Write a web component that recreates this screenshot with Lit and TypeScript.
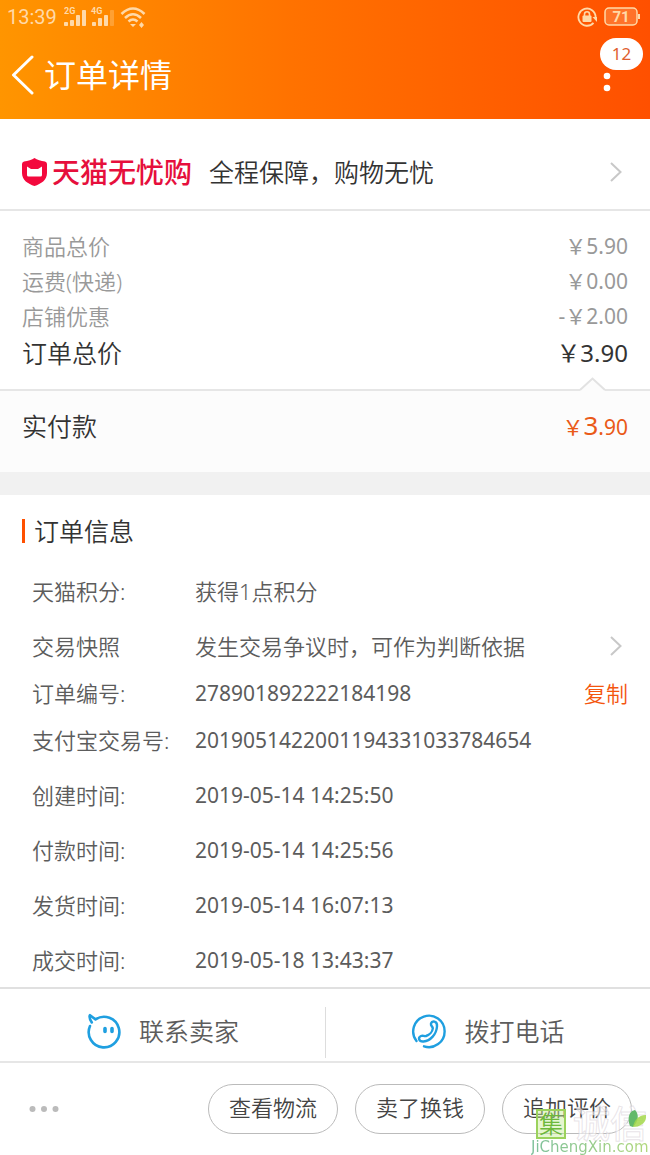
import { LitElement, html, css, svg } from "lit";
import { customElement } from "lit/decorators.js";

interface InfoItem {
  label: string;
  value: string;
  link?: boolean;
  copy?: boolean;
}

const PRICES = [
  ["商品总价", "￥5.90"],
  ["运费(快递)", "￥0.00"],
  ["店铺优惠", "-￥2.00"],
];

const INFO: InfoItem[][] = [
  [{ label: "天猫积分:", value: "获得1点积分" }],
  [
    { label: "交易快照", value: "发生交易争议时，可作为判断依据", link: true },
    { label: "订单编号:", value: "278901892222184198", copy: true },
    { label: "支付宝交易号:", value: "2019051422001194331033784654" },
  ],
  [{ label: "创建时间:", value: "2019-05-14 14:25:50" }],
  [{ label: "付款时间:", value: "2019-05-14 14:25:56" }],
  [{ label: "发货时间:", value: "2019-05-14 16:07:13" }],
  [{ label: "成交时间:", value: "2019-05-18 13:43:37" }],
];

const chevron = html`<svg class="chevron" width="12" height="20" viewBox="0 0 12 20" aria-hidden="true">
  <path d="M1 1l9.500 9L1 19" fill="none" stroke="#c8c8c8" stroke-width="2" />
</svg>`;

const bars = (heights: number[], dim: number) =>
  heights.map(
    (h, i) => svg`<rect x=${i * 6} y=${18 - h} width="4" height=${h} rx="0.800"
      opacity=${i >= dim ? 0.3 : 1} />`
  );

@customElement("app-root")
export class AppRoot extends LitElement {
  static styles = css`
    :host {
      display: flex;
      flex-direction: column;
      min-height: 100vh;
      position: relative;
      overflow: hidden;
      background: #fff;
      color: #333;
      font-family: "Noto Sans", "Noto Sans CJK SC", sans-serif;
      font-weight: 350;
      font-size: 22px;
      line-height: 32px;
    }
    * {
      box-sizing: border-box;
    }
    button,
    a {
      font: inherit;
      color: inherit;
      text-decoration: none;
      background: none;
      border: 0;
      padding: 0;
      margin: 0;
      white-space: nowrap;
    }
    svg {
      display: block;
      flex: none;
    }
    h1,
    h2,
    dl,
    dd {
      margin: 0;
      font-weight: inherit;
    }
    .num {
      font-size: 21px;
      font-weight: 400;
    }
    .header {
      height: 119px;
      background: linear-gradient(90deg, #ff9500, #ff7200 45%, #ff5000);
      color: #fff;
    }
    .status {
      display: flex;
      justify-content: space-between;
      align-items: center;
      height: 33px;
      padding: 0 10px 0 7px;
      color: #ffd9a8;
      fill: #ffd9a8;
    }
    .status-group {
      display: flex;
      align-items: center;
      gap: 7px;
    }
    .clock {
      font: 400 20px/32px Roboto, sans-serif;
    }
    .net {
      font: 700 9px Roboto, sans-serif;
    }
    .titlebar {
      display: flex;
      justify-content: space-between;
      align-items: center;
      height: 84px;
      padding: 0 36px 0 11px;
    }
    .back {
      display: flex;
      align-items: center;
      gap: 10px;
    }
    .title {
      font-size: 32px;
      line-height: 44px;
      font-weight: 400;
    }
    .more {
      position: relative;
      width: 14px;
      height: 44px;
    }
    .badge {
      position: absolute;
      left: 0;
      bottom: 27px;
      width: 43px;
      height: 32px;
      border-radius: 16px;
      background: #fff;
      color: #e06030;
      font: 400 17px/32px "Noto Sans", sans-serif;
      text-align: center;
    }
    .dots {
      position: absolute;
      left: 3px;
      bottom: 4px;
    }
    .promo {
      display: flex;
      align-items: center;
      height: 92px;
      padding: 16px 28px 0 22px;
      border-bottom: 2px solid #e6e6e6;
      font-size: 25px;
    }
    .brand {
      margin: 0 17px 0 5px;
      font-size: 28px;
      font-weight: 500;
      color: #e60f3c;
    }
    .chevron {
      margin-left: auto;
    }
    .prices {
      padding: 17px 22px 16px;
      border-bottom: 2px solid #e6e6e6;
      color: #999;
      position: relative;
    }
    .price {
      display: flex;
      justify-content: space-between;
      align-items: center;
      height: 35px;
    }
    .total {
      height: 40px;
      color: #333;
      font-size: 25px;
    }
    .total .num {
      font-size: 24px;
    }
    .notch {
      position: absolute;
      right: 44px;
      bottom: -2px;
    }
    .paid {
      display: flex;
      justify-content: space-between;
      align-items: center;
      height: 81px;
      padding: 0 22px 12px;
      background: #fcfcfc;
      font-size: 25px;
    }
    .amount {
      font-size: 21px;
      font-weight: 400;
      color: #ea5a18;
    }
    .amount-main {
      font-size: 26px;
    }
    .band {
      height: 23px;
      background: #f1f1f1;
    }
    .info-title {
      margin: 19px 0 0 22px;
      display: flex;
      align-items: center;
      gap: 9px;
      height: 34px;
      font-size: 25px;
    }
    .info-title::before {
      content: "";
      width: 3px;
      height: 24px;
      background: #ff5000;
    }
    .info {
      display: flex;
      flex-direction: column;
      gap: 23px;
      padding: 27px 22px 11px 32px;
      color: #5c5c5c;
    }
    .info-group {
      display: flex;
      flex-direction: column;
      gap: 15px;
    }
    .info-row {
      display: grid;
      grid-template-columns: 163px 1fr auto;
      align-items: center;
      height: 32px;
      white-space: nowrap;
    }
    .info-row .chevron {
      margin-right: 6px;
    }
    .copy {
      color: #f4560f;
    }
    .contact {
      display: grid;
      grid-template-columns: 1fr 1fr;
      height: 76px;
      align-items: center;
      border-top: 2px solid #e0e0e0;
      border-bottom: 2px solid #e6e6e6;
      font-size: 25px;
      color: #5c5c5c;
    }
    .contact-link {
      display: flex;
      align-items: center;
      justify-content: center;
      gap: 17px;
      height: 51px;
      margin-top: 14px;
      padding-bottom: 3px;
    }
    .contact-link + .contact-link {
      border-left: 1px solid #ddd;
    }
    .actions {
      display: flex;
      align-items: center;
      gap: 17px;
      height: 91px;
      padding: 0 18px 0 29px;
      color: #444;
    }
    .overflow {
      margin-right: auto;
    }
    .pill {
      width: 130px;
      height: 50px;
      padding-bottom: 3px;
      border: 1px solid #bbb;
      border-radius: 25px;
    }
    .mark {
      position: absolute;
      right: 0;
      bottom: 0;
      width: 119px;
      pointer-events: none;
    }
    .mark-top {
      display: flex;
      align-items: center;
      gap: 7px;
      height: 30px;
      padding-left: 5px;
    }
    .mark-box {
      width: 30px;
      height: 30px;
      border: 2px solid #9bd25c;
      background: rgba(200, 236, 150, 0.45);
      color: #6db83a;
      font-size: 24px;
      line-height: 25px;
      text-align: center;
    }
    .mark-name {
      font-size: 37px;
      line-height: 30px;
      font-weight: 500;
      color: rgba(255, 255, 255, 0.6);
      -webkit-text-stroke: 1px rgba(205, 195, 205, 0.45);
    }
    .leaf {
      position: absolute;
      right: 4px;
      top: 0;
    }
    .mark-url {
      font: 400 15px/16px "DejaVu Sans", sans-serif;
      background: linear-gradient(90deg, #7cc09a, #b2d87c);
      background-clip: text;
      -webkit-background-clip: text;
      color: transparent;
    }
  `;

  render() {
    return html`
      <header class="header">
        <div class="status">
          <div class="status-group">
            <span class="clock">13:39</span>
            <svg width="83" height="22" viewBox="0 0 83 22">
              <text class="net" x="0" y="8">2G</text>
              <g transform="translate(0 2)">${bars([4, 6, 11, 16], 9)}</g>
              <text class="net" x="27" y="8">4G</text>
              <g transform="translate(28 2)">${bars([4, 8, 11, 16], 3)}</g>
              <g fill="none" stroke="#ffd9a8" stroke-width="2.600">
                <path d="M57.500 8Q69 -3 80.500 8M61 12Q69 4.500 77 12M64.500 15.500Q69 11.500 73.500 15.500" />
              </g>
              <path d="M66 18h6L69 21zM75 19l2.500-3 2.500 3-2.500 3z" />
            </svg>
          </div>
          <div class="status-group">
            <svg width="20" height="20" viewBox="0 0 20 20">
              <path d="M16.500 15.800A8.600 8.600 0 1 1 18.600 10" fill="none" stroke="#ffd9a8" stroke-width="1.800" />
              <path d="M15.500 10h4.500v5z" />
              <rect x="5.500" y="8.500" width="9" height="6.500" rx="1" />
              <path d="M7.500 9V7.300a2.500 2.500 0 0 1 5 0V9" fill="none" stroke="#ffd9a8" stroke-width="1.600" />
            </svg>
            <svg width="36" height="20" viewBox="0 0 36 20">
              <rect x="1" y="1" width="32" height="17" rx="4" fill="#ffd9a8" fill-opacity=".25" stroke="#ffd9a8" stroke-width="1.500" />
              <rect x="34" y="7" width="2" height="5" />
              <text x="17" y="15" text-anchor="middle" font-family="Roboto" font-weight="700" font-size="15">71</text>
            </svg>
          </div>
        </div>
        <div class="titlebar">
          <button class="back" aria-label="返回">
            <svg width="23" height="40" viewBox="0 0 23 40">
              <path d="M21 2L2.500 20 21 38" fill="none" stroke="#fff" stroke-width="3" stroke-linejoin="round" stroke-linecap="round" />
            </svg>
            <h1 class="title">订单详情</h1>
          </button>
          <button class="more" aria-label="更多">
            <svg class="dots" width="8" height="22" viewBox="0 0 8 22" fill="#fff">
              <circle cx="4" cy="5" r="3.300" />
              <circle cx="4" cy="17" r="3.300" />
            </svg>
            <span class="badge">12</span>
          </button>
        </div>
      </header>

      <a class="promo" href="#guarantee">
        <svg width="25" height="28" viewBox="0 0 25 28">
          <path d="M12.500 0C15 2 19 3 23 3.500Q25 4 25 6v9c0 7-6 11-12.500 13C6 26 0 22 0 15V6Q0 4 2 3.500C6 3 10 2 12.500 0z" fill="#f3093d" />
          <path d="M5 8.500l4 2.500h7l4-2.500V17q0 1.500-1.500 1.500h-12Q5 18.500 5 17z" fill="#fff" />
        </svg>
        <span class="brand">天猫无忧购</span>
        <span>全程保障，购物无忧</span>
        ${chevron}
      </a>

      <section class="prices">
        ${PRICES.map(
          ([label, value]) => html`<div class="price"><span>${label}</span><span class="num">${value}</span></div>`
        )}
        <div class="price total"><span>订单总价</span><span class="num">￥3.90</span></div>
        <svg class="notch" width="27" height="14" viewBox="0 0 27 14">
          <path d="M1 13L13.500 1 26 13v1H1z" fill="#fcfcfc" />
          <path d="M1 13L13.500 1.500 26 13" fill="none" stroke="#e2e2e2" stroke-width="2" />
        </svg>
      </section>
      <section class="paid">
        <span>实付款</span>
        <span class="amount">￥<span class="amount-main">3</span>.90</span>
      </section>
      <div class="band"></div>

      <h2 class="info-title">订单信息</h2>
      <dl class="info">
        ${INFO.map(
          (group) => html`<div class="info-group">
            ${group.map(
              (item) => html`<div class="info-row">
                <dt>${item.label}</dt>
                <dd class=${/^\d/.test(item.value) ? "num" : ""}>${item.value}</dd>
                ${item.link ? chevron : ""}
                ${item.copy ? html`<button class="copy">复制</button>` : ""}
              </div>`
            )}
          </div>`
        )}
      </dl>

      <nav class="contact">
        <a class="contact-link" href="#seller">
          <svg width="36" height="36" viewBox="0 0 36 36" fill="none" stroke="#1f9fe0" stroke-width="2.600" stroke-linecap="round" stroke-linejoin="round">
            <path d="M4 13A15.300 15.300 0 1 0 9.500 6.400L4 2.200Q2.500 4 5.800 9.500" />
            <path d="M19 15.500v3M26 15.500v3" stroke-width="3.600" />
          </svg>
          <span>联系卖家</span>
        </a>
        <a class="contact-link" href="#call">
          <svg width="36" height="36" viewBox="0 0 36 36" fill="none" stroke="#1f9fe0" stroke-width="2.400" stroke-linecap="round" stroke-linejoin="round">
            <path d="M5.500 28A15.700 15.700 0 1 1 13 33.300" />
            <path d="M20 10.500C21 7.500 26.500 7.500 26 13.500 25.500 21 19.500 28 12.500 28.500 7.500 28.800 6.800 24.500 10 23c2-.9 3 .6 5 0C18.500 21.800 21.500 18.500 21.800 15.500 22 13.500 19.300 13 20 10.500z" />
          </svg>
          <span>拨打电话</span>
        </a>
      </nav>

      <footer class="actions">
        <button class="overflow" aria-label="更多操作">
          <svg width="30" height="8" viewBox="0 0 30 8" fill="#bbb">
            <circle cx="3.500" cy="4" r="3" />
            <circle cx="15" cy="4" r="3" />
            <circle cx="26.500" cy="4" r="3" />
          </svg>
        </button>
        <button class="pill">查看物流</button>
        <button class="pill">卖了换钱</button>
        <button class="pill">追加评价</button>
      </footer>

      <div class="mark">
        <div class="mark-top">
          <span class="mark-box">集</span>
          <span class="mark-name">诚信</span>
          <svg class="leaf" width="18" height="20" viewBox="0 0 18 20">
            <path d="M2 17C-1 9 1 2 7 1c4 4 4 11-2 17z" fill="#63b96a" />
            <path d="M5 18c1-6 5-12 13-12 1 7-5 12-13 12z" fill="#a5d84a" opacity=".85" />
          </svg>
        </div>
        <div class="mark-url">JiChengXin.com</div>
      </div>
    `;
  }
}
